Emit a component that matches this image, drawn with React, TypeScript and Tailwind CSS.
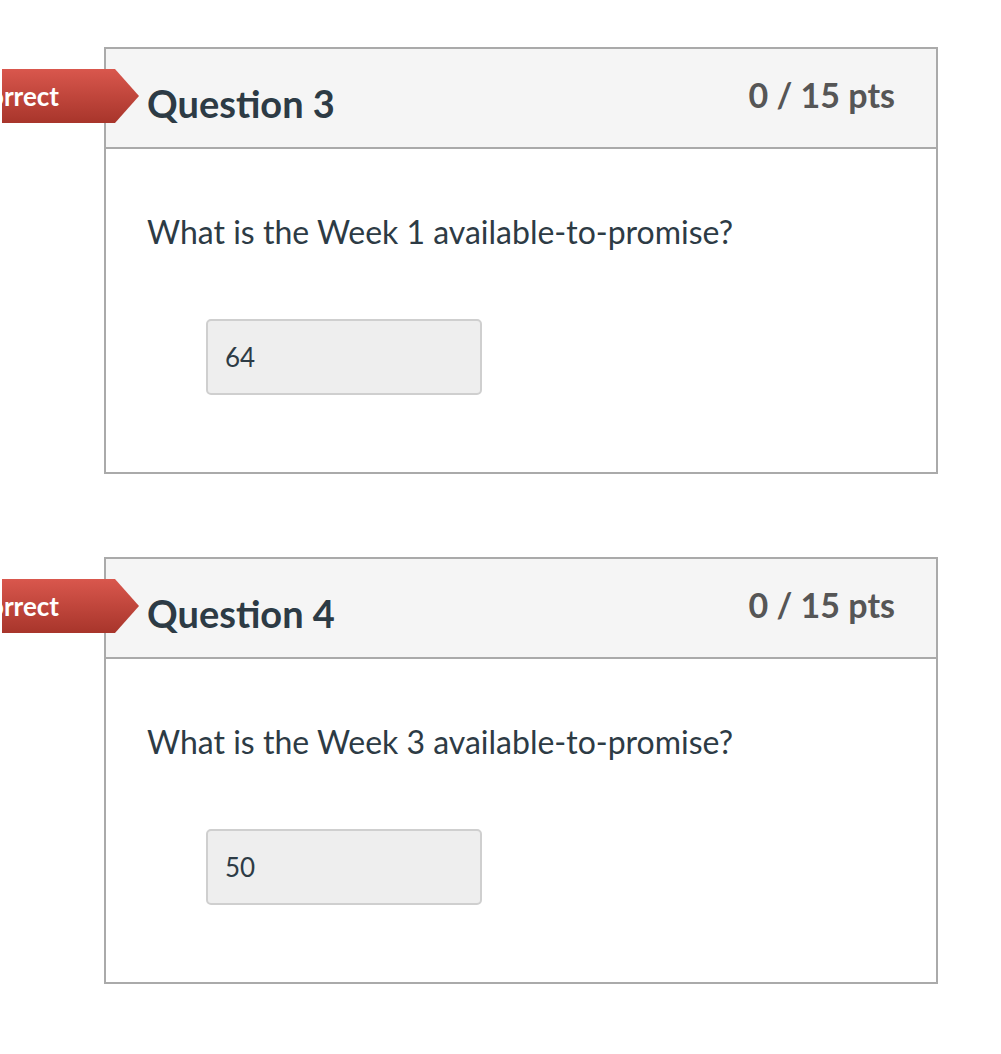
const questions = [
  { id: 3, text: 'What is the Week 1 available-to-promise?', answer: '64' },
  { id: 4, text: 'What is the Week 3 available-to-promise?', answer: '50' },
];

function IncorrectArrow() {
  return (
    <div className="absolute left-[-104px] top-[20px] h-[54px] w-[137px] overflow-hidden">
      <div className="absolute right-0 top-0 flex h-[54px] w-[240px] items-center justify-end bg-gradient-to-b from-[#d9574d] to-[#a8352b] pr-[80px] [clip-path:polygon(0_0,216px_0,240px_27px,216px_54px,0_54px)]">
        <span className="text-[26px] font-bold leading-none text-white">Incorrect</span>
      </div>
    </div>
  );
}

function QuestionCard({ id, text, answer }: { id: number; text: string; answer: string }) {
  return (
    <div className="relative w-[834px] border-2 border-[#aaaaaa] bg-white">
      <IncorrectArrow />
      <div className="flex h-[100px] justify-between border-b-2 border-[#aaaaaa] bg-[#f5f5f5] px-[41px]">
        <h2 className="mt-[35px] text-[38px] font-bold leading-none text-[#2d3b45]">Question {id}</h2>
        <div className="mt-[29px] text-[34px] font-bold leading-none text-[#565656]">0 / 15 pts</div>
      </div>
      <div className="px-[41px] pb-[77px] pt-[60px]">
        <p className="text-[32px] leading-[45px] text-[#2d3b45]">{text}</p>
        <div className="ml-[59px] mt-[65px] flex h-[76px] w-[276px] items-center rounded-[5px] border-2 border-[#cfcfcf] bg-[#eeeeee] px-[17px]">
          <span className="text-[26px] text-[#2d3b45]">{answer}</span>
        </div>
      </div>
    </div>
  );
}

export default function App() {
  return (
    <div className="min-h-[1054px] overflow-hidden bg-white pl-[104px] pt-[47px] font-['Lato','Liberation_Sans',sans-serif]">
      <div className="flex flex-col gap-[83px]">
        {questions.map((q) => (
          <QuestionCard key={q.id} {...q} />
        ))}
      </div>
    </div>
  );
}
